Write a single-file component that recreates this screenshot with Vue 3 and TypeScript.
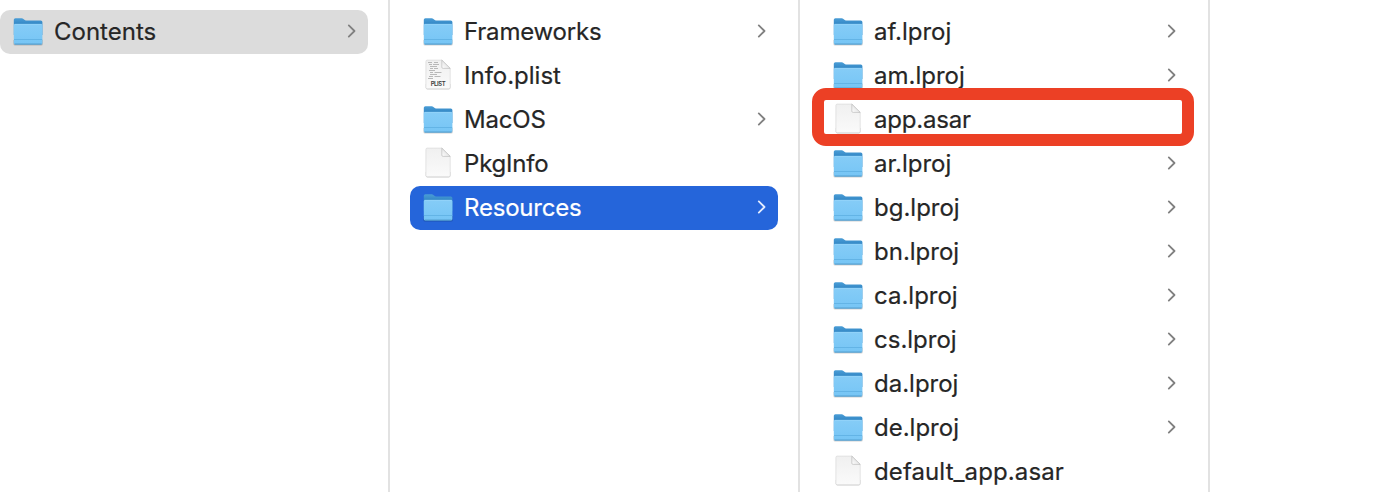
<script setup lang="ts">
type Kind = 'folder' | 'file' | 'plist'
type Selection = 'inactive' | 'active'

interface Entry {
  name: string
  kind: Kind
  selection?: Selection
  marked?: boolean
  tracking?: 'tight' | 'loose'
}

const folder = (name: string, extra: Partial<Entry> = {}): Entry => ({ name, kind: 'folder', ...extra })

const columns: Entry[][] = [
  [folder('Contents', { selection: 'inactive' })],
  [
    folder('Frameworks', { tracking: 'tight' }),
    { name: 'Info.plist', kind: 'plist' },
    folder('MacOS', { tracking: 'tight' }),
    { name: 'PkgInfo', kind: 'file', tracking: 'tight' },
    folder('Resources', { selection: 'active', tracking: 'tight' }),
  ],
  [
    folder('af.lproj'),
    folder('am.lproj'),
    { name: 'app.asar', kind: 'file', marked: true, tracking: 'tight' },
    folder('ar.lproj'),
    folder('bg.lproj'),
    folder('bn.lproj'),
    folder('ca.lproj'),
    folder('cs.lproj'),
    folder('da.lproj'),
    folder('de.lproj'),
    { name: 'default_app.asar', kind: 'file', tracking: 'loose' },
  ],
]
</script>

<template>
  <main class="browser">
    <svg class="defs" width="0" height="0" aria-hidden="true">
      <defs>
        <linearGradient id="front" x1="0" y1="0" x2="0" y2="1">
          <stop offset="0" stop-color="#85ccf7" />
          <stop offset="1" stop-color="#76c5f5" />
        </linearGradient>
        <linearGradient id="back" x1="0" y1="0" x2="0" y2="1">
          <stop offset="0" stop-color="#4a9dd6" />
          <stop offset="0.3" stop-color="#378bc8" />
        </linearGradient>
        <linearGradient id="paper" x1="0" y1="0" x2="0" y2="1">
          <stop offset="0" stop-color="#f0f0f0" />
          <stop offset="1" stop-color="#fafafa" />
        </linearGradient>
        <linearGradient id="fold" x1="0" y1="1" x2="1" y2="0">
          <stop offset="0" stop-color="#ffffff" />
          <stop offset="0.5" stop-color="#e8e8e8" />
        </linearGradient>
      </defs>
    </svg>
    <section v-for="(entries, i) in columns" :key="i" class="column">
      <div
        v-for="entry in entries"
        :key="entry.name"
        class="row"
        :class="[entry.selection, { marked: entry.marked }]"
      >
        <svg v-if="entry.kind === 'folder'" class="icon" viewBox="0 0 32 32">
          <path class="shadow" d="M1.4 25h29.4v3.9q0 1.7-1.7 1.7h-26q-1.7 0-1.7-1.7z" />
          <path
            fill="url(#back)"
            d="M1.8 4.8q0-1.6 1.6-1.6h6.3q1 0 1.7.7l1 .9q.7.6 1.6.6h14.8q1.6 0 1.6 1.6V20H1.8z"
          />
          <path fill="url(#front)" d="M1.8 10.2q0-1.3 1.3-1.3h26q1.3 0 1.3 1.3v17.9q0 1.4-1.4 1.4H3.2q-1.4 0-1.4-1.4z" />
          <path d="M2.6 9.3h27" stroke="#9bd7fa" stroke-width=".7" />
          <path d="M2 24.5h28.2" stroke="#5dafe2" stroke-width=".8" />
          <path d="M2.6 29.1h27" stroke="#4793c4" stroke-width=".9" />
        </svg>
        <svg v-else class="icon" viewBox="0 0 32 32">
          <path class="shadow" d="M3.7 25h24.8v3.6q0 1.9-1.8 1.9H5.5q-1.8 0-1.8-1.9z" />
          <path
            fill="url(#paper)"
            stroke="#d4d4d4"
            stroke-width=".6"
            d="M5.3 1.1h14.5l8.4 8.3v18.8q0 1.6-1.6 1.6H5.3q-1.4 0-1.4-1.4V2.5q0-1.4 1.4-1.4z"
          />
          <template v-if="entry.kind === 'plist'">
            <path
              fill="none"
              stroke="#a8a8a8"
              stroke-width=".8"
              d="M6 3.5h4M12 3.5h4M7 5.5h3M11 5.5h6M8 7.5h7M8 9.5h3M12 9.5h4M7 11.5h6M8 13.5h3M12.5 13.5h7M8 15.5h7M7 17.5h4M12.5 17.5h6M6 19.5h5"
            />
            <text class="badge" x="16.2" y="27.4" text-anchor="middle" textLength="15" lengthAdjust="spacing">PLIST</text>
          </template>
          <path fill="url(#fold)" stroke="#b4b4b4" stroke-width=".6" d="M19.8 1.1v7q0 1.3 1.3 1.3h7.1z" />
        </svg>
        <span class="name" :class="entry.tracking">{{ entry.name }}</span>
        <svg v-if="entry.kind === 'folder'" class="chevron" viewBox="0 0 10 14">
          <path d="M1.8 1.4 7.5 7l-5.7 5.6" />
        </svg>
      </div>
    </section>
  </main>
</template>

<style>
body {
  background: #fff;
  overflow: hidden;
}
</style>

<style scoped>
.browser {
  display: flex;
  height: 492px;
  overflow: hidden;
  background: #fff;
  color: #262626;
  font: 400 24px/44px Inter, 'Liberation Sans', sans-serif;
}
.defs {
  position: absolute;
}
.column {
  box-sizing: border-box;
  flex: none;
  width: 410px;
  height: 492px;
  padding: 10px 20px 0;
  border-right: 2px solid #e2e2e2;
}
.column:first-of-type {
  width: 390px;
  padding-left: 0;
}
.row {
  position: relative;
  display: flex;
  align-items: center;
  box-sizing: border-box;
  height: 44px;
  padding: 0 11px 0 12px;
  border-radius: 10px;
}
.inactive {
  background: #dcdcdc;
}
.active {
  background: #2565da;
  color: #fff;
}
.icon {
  flex: none;
  width: 32px;
  height: 32px;
  margin: -2px 10px 0 0;
}
.shadow {
  fill: #000;
  opacity: 0.18;
}
.name {
  flex: 1;
  white-space: nowrap;
  -webkit-text-stroke: 0.2px currentColor;
}
.tight {
  letter-spacing: -0.2px;
}
.loose {
  letter-spacing: 0.1px;
}
.badge {
  font: 600 6px Inter, sans-serif;
  fill: #3c3c3c;
}
.chevron {
  width: 10px;
  height: 14px;
  margin-top: -2px;
}
.chevron path {
  fill: none;
  stroke: #808080;
  stroke-width: 1.8;
  stroke-linecap: round;
  stroke-linejoin: round;
}
.active .chevron path {
  stroke: #e4edff;
}
.marked {
  z-index: 1;
}
.marked::after {
  content: '';
  position: absolute;
  box-sizing: border-box;
  top: -10px;
  left: -8px;
  width: 382px;
  height: 58px;
  border: 12px solid #ec4025;
  border-radius: 14px;
}
</style>
